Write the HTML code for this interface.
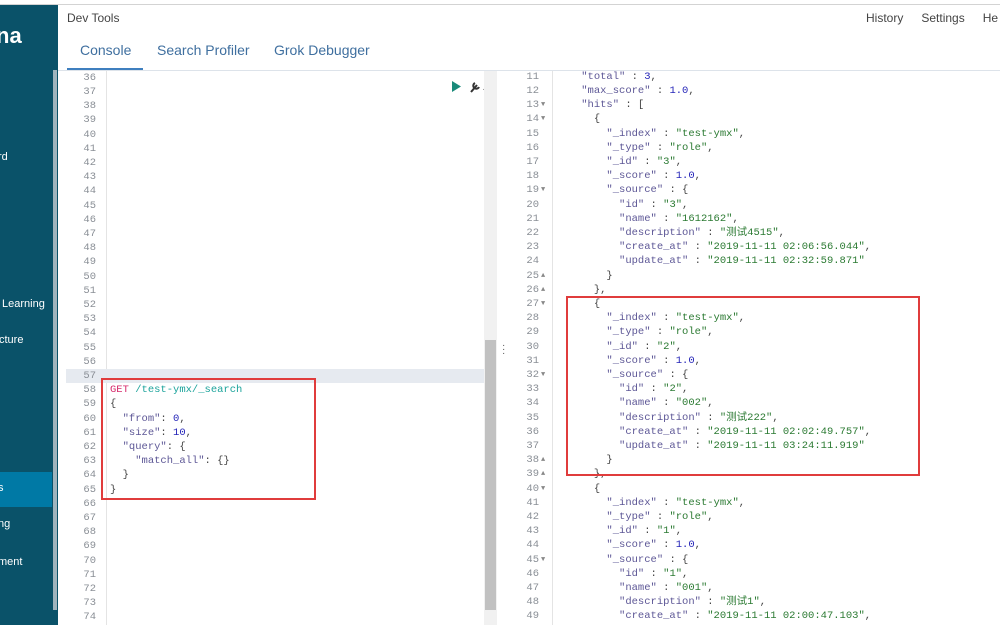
<!DOCTYPE html>
<html><head><meta charset="utf-8"><style>
*{margin:0;padding:0;box-sizing:border-box}
body{width:1000px;height:625px;overflow:hidden;background:#fff;font-family:"Liberation Sans","Noto Sans CJK SC",sans-serif;position:relative}
.abs{position:absolute}
#top{left:0;top:0;width:1000px;height:5px;background:#fff;border-bottom:1px solid #d3d3d3}
#side{left:0;top:5px;width:58px;height:620px;background:#0a5269}
#side .t{position:absolute;color:#fff;font-size:11px;white-space:nowrap}
pre{font-family:"Liberation Mono","Noto Sans CJK SC",monospace;font-size:10.5px;line-height:14.2px;position:absolute;margin:0}
.ln{color:#8a8f96;text-align:right}
.k{color:#5d5796}.s{color:#2b7a32}.n{color:#2424b8}.p{color:#444}.g{color:#d6286a}.u{color:#1ba39b}
</style></head><body>
<div id="top" class="abs"></div>
<div id="side" class="abs">
 <div class="t" style="left:-4px;top:18px;font-size:22px;font-weight:bold">na</div>
 <div class="t" style="left:-2px;top:146px">rd</div>
 <div class="t" style="left:2px;top:293px">Learning</div>
 <div class="t" style="left:-1px;top:329px">cture</div>
 <div style="position:absolute;left:0;top:467px;width:52px;height:35px;background:#0079a5"></div>
 <div class="t" style="left:-2px;top:477px">s</div>
 <div class="t" style="left:-2px;top:513px">ng</div>
 <div class="t" style="left:-2px;top:551px">ment</div>
 <div style="position:absolute;left:53px;top:65px;width:4px;height:540px;background:#9fb4bd"></div>
</div>
<div class="abs" style="left:67px;top:11px;font-size:12px;color:#444">Dev Tools</div>
<div class="abs" style="left:866px;top:11px;font-size:12px;color:#444;white-space:nowrap">History<span style="margin-left:18px">Settings</span><span style="margin-left:18px">He</span></div>
<div class="abs" style="left:80px;top:42px;font-size:14px;color:#3f6f9f">Console</div>
<div class="abs" style="left:157px;top:42px;font-size:14px;color:#3f6f9f">Search Profiler</div>
<div class="abs" style="left:274px;top:42px;font-size:14px;color:#3f6f9f">Grok Debugger</div>
<div class="abs" style="left:67px;top:68px;width:76px;height:2px;background:#3f7fbf"></div>
<div class="abs" style="left:58px;top:70px;width:942px;height:1px;background:#dde3ea"></div>
<!-- left editor -->
<div class="abs" style="left:106px;top:71px;width:1px;height:554px;background:#e4e4e4"></div>
<div class="abs" style="left:66px;top:369px;width:418px;height:14px;background:#e6eaf0"></div>
<pre class="ln" style="left:66px;top:70.7px;width:30px">36
37
38
39
40
41
42
43
44
45
46
47
48
49
50
51
52
53
54
55
56
57
58
59
60
61
62
63
64
65
66
67
68
69
70
71
72
73
74</pre>
<pre style="left:110px;top:70.7px">






















<span class="g">GET</span> <span class="u">/test-ymx/_search</span>
<span class="p">{</span>
  <span class="k">"from"</span><span class="p">: </span><span class="n">0</span><span class="p">,</span>
  <span class="k">"size"</span><span class="p">: </span><span class="n">10</span><span class="p">,</span>
  <span class="k">"query"</span><span class="p">: {</span>
    <span class="k">"match_all"</span><span class="p">: {}</span>
  <span class="p">}</span>
<span class="p">}</span></pre>
<div class="abs" style="left:101px;top:378px;width:215px;height:122px;border:2px solid #e03c3c"></div>
<svg class="abs" style="left:450px;top:80px" width="40" height="14"><polygon points="2,1 11,6.5 2,12" fill="#1a8a7a"/><path d="M21,12 L27,5 M25,3 a3,3 0 1 0 4,4" stroke="#333" stroke-width="2" fill="none"/><polygon points="36,6 39,10 33,10" fill="#666"/></svg>
<div class="abs" style="left:484px;top:71px;width:13px;height:554px;background:#f1f1f1"></div>
<div class="abs" style="left:485px;top:340px;width:11px;height:270px;background:#c1c1c1"></div>
<div class="abs" style="left:502px;top:344px;font-size:10px;color:#555;line-height:4px">·<br>·<br>·</div>
<!-- right output -->
<div class="abs" style="left:552px;top:71px;width:1px;height:554px;background:#e4e4e4"></div>
<pre class="ln" style="left:515px;top:69.7px;width:24px">11
12
13
14
15
16
17
18
19
20
21
22
23
24
25
26
27
28
29
30
31
32
33
34
35
36
37
38
39
40
41
42
43
44
45
46
47
48
49</pre>
<pre style="left:541px;top:69.7px;font-size:7px;line-height:14.2px;color:#888"> 

▼
▼




▼





▲
▲
▼




▼





▲
▲
▼




▼</pre>
<pre style="left:556px;top:69.7px"><span class="p">    </span><span class="k">"total"</span><span class="p"> : </span><span class="n">3</span><span class="p">,</span>
    <span class="k">"max_score"</span><span class="p"> : </span><span class="n">1.0</span><span class="p">,</span>
    <span class="k">"hits"</span><span class="p"> : [</span>
      <span class="p">{</span>
        <span class="k">"_index"</span><span class="p"> : </span><span class="s">"test-ymx"</span><span class="p">,</span>
        <span class="k">"_type"</span><span class="p"> : </span><span class="s">"role"</span><span class="p">,</span>
        <span class="k">"_id"</span><span class="p"> : </span><span class="s">"3"</span><span class="p">,</span>
        <span class="k">"_score"</span><span class="p"> : </span><span class="n">1.0</span><span class="p">,</span>
        <span class="k">"_source"</span><span class="p"> : {</span>
          <span class="k">"id"</span><span class="p"> : </span><span class="s">"3"</span><span class="p">,</span>
          <span class="k">"name"</span><span class="p"> : </span><span class="s">"1612162"</span><span class="p">,</span>
          <span class="k">"description"</span><span class="p"> : </span><span class="s">"测试4515"</span><span class="p">,</span>
          <span class="k">"create_at"</span><span class="p"> : </span><span class="s">"2019-11-11 02:06:56.044"</span><span class="p">,</span>
          <span class="k">"update_at"</span><span class="p"> : </span><span class="s">"2019-11-11 02:32:59.871"</span>
        <span class="p">}</span>
      <span class="p">},</span>
      <span class="p">{</span>
        <span class="k">"_index"</span><span class="p"> : </span><span class="s">"test-ymx"</span><span class="p">,</span>
        <span class="k">"_type"</span><span class="p"> : </span><span class="s">"role"</span><span class="p">,</span>
        <span class="k">"_id"</span><span class="p"> : </span><span class="s">"2"</span><span class="p">,</span>
        <span class="k">"_score"</span><span class="p"> : </span><span class="n">1.0</span><span class="p">,</span>
        <span class="k">"_source"</span><span class="p"> : {</span>
          <span class="k">"id"</span><span class="p"> : </span><span class="s">"2"</span><span class="p">,</span>
          <span class="k">"name"</span><span class="p"> : </span><span class="s">"002"</span><span class="p">,</span>
          <span class="k">"description"</span><span class="p"> : </span><span class="s">"测试222"</span><span class="p">,</span>
          <span class="k">"create_at"</span><span class="p"> : </span><span class="s">"2019-11-11 02:02:49.757"</span><span class="p">,</span>
          <span class="k">"update_at"</span><span class="p"> : </span><span class="s">"2019-11-11 03:24:11.919"</span>
        <span class="p">}</span>
      <span class="p">},</span>
      <span class="p">{</span>
        <span class="k">"_index"</span><span class="p"> : </span><span class="s">"test-ymx"</span><span class="p">,</span>
        <span class="k">"_type"</span><span class="p"> : </span><span class="s">"role"</span><span class="p">,</span>
        <span class="k">"_id"</span><span class="p"> : </span><span class="s">"1"</span><span class="p">,</span>
        <span class="k">"_score"</span><span class="p"> : </span><span class="n">1.0</span><span class="p">,</span>
        <span class="k">"_source"</span><span class="p"> : {</span>
          <span class="k">"id"</span><span class="p"> : </span><span class="s">"1"</span><span class="p">,</span>
          <span class="k">"name"</span><span class="p"> : </span><span class="s">"001"</span><span class="p">,</span>
          <span class="k">"description"</span><span class="p"> : </span><span class="s">"测试1"</span><span class="p">,</span>
          <span class="k">"create_at"</span><span class="p"> : </span><span class="s">"2019-11-11 02:00:47.103"</span><span class="p">,</span></pre>
<div class="abs" style="left:566px;top:296px;width:354px;height:180px;border:2px solid #e03c3c"></div>
</body></html>
